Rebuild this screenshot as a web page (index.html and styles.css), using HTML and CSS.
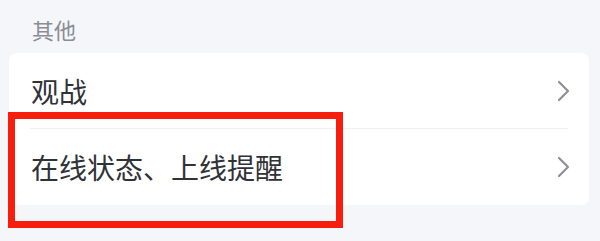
FILE: index.html
```html
<!DOCTYPE html>
<html lang="zh-CN">
<head>
<meta charset="utf-8">
<link rel="stylesheet" href="styles.css">
</head>
<body>
<div class="page">
  <div class="section-title">其他</div>
  <div class="card">
    <div class="row">
      <span class="label">观战</span>
      <svg class="chev" viewBox="0 0 13 22" width="13" height="22"><path d="M2 2 L11 11 L2 20" fill="none" stroke="#8e9096" stroke-width="2.2" stroke-linecap="round" stroke-linejoin="round"/></svg>
    </div>
    <div class="row divided">
      <span class="label">在线状态、上线提醒</span>
      <svg class="chev" viewBox="0 0 13 22" width="13" height="22"><path d="M2 2 L11 11 L2 20" fill="none" stroke="#8e9096" stroke-width="2.2" stroke-linecap="round" stroke-linejoin="round"/></svg>
    </div>
  </div>
  <div class="highlight"></div>
</div>
</body>
</html>
```
FILE: styles.css
```css
html, body {
  margin: 0;
  padding: 0;
  background: #f5f6fa;
}
.page {
  position: relative;
  width: 600px;
  height: 241px;
  overflow: hidden;
  font-family: "Noto Sans CJK SC", "Noto Sans", sans-serif;
}
.section-title {
  box-sizing: border-box;
  height: 53px;
  padding: 17px 0 0 32px;
  font-size: 22px;
  line-height: 24px;
  color: #8a8d93;
}
.card {
  margin: 0 11px 0 9px;
  background: #ffffff;
  border-radius: 8px;
}
.row {
  position: relative;
  height: 76px;
  display: flex;
  align-items: center;
  justify-content: space-between;
  padding: 0 19px 0 22px;
}
.row.divided::before {
  content: "";
  position: absolute;
  top: -1px;
  left: 21px;
  right: 21px;
  height: 1px;
  background: #eef0f3;
}
.label {
  font-size: 28px;
  line-height: 30px;
  color: #2f3237;
}
.chev {
  display: block;
}
.highlight {
  position: absolute;
  left: 8px;
  top: 112px;
  width: 335px;
  height: 116px;
  box-sizing: border-box;
  border: 7px solid #f71e0e;
}
```
